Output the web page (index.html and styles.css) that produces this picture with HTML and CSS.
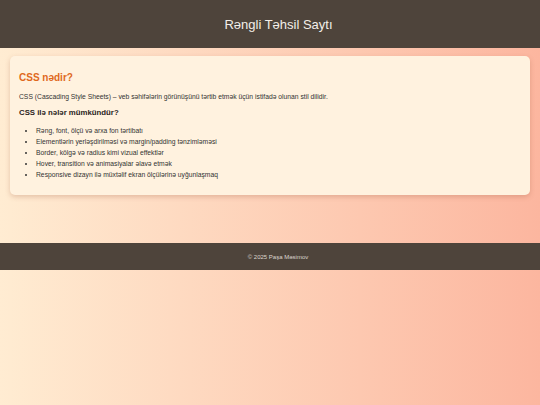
FILE: index.html
```html
<!DOCTYPE html>
<html lang="az">
<head>
<meta charset="utf-8">
<title>Rəngli Təhsil Saytı</title>
<link rel="stylesheet" href="styles.css">
</head>
<body>
<header class="site-header">
  <h1 class="site-title">Rəngli Təhsil Saytı</h1>
</header>
<main class="content">
  <section class="card">
    <h2 class="card-title">CSS nədir?</h2>
    <p class="card-text">CSS (Cascading Style Sheets) – veb səhifələrin görünüşünü tərtib etmək üçün istifadə olunan stil dilidir.</p>
    <h3 class="card-subtitle">CSS ilə nələr mümkündür?</h3>
    <ul class="card-list">
      <li>Rəng, font, ölçü və arxa fon tərtibatı</li>
      <li>Elementlərin yerləşdirilməsi və margin/padding tənzimləməsi</li>
      <li>Border, kölgə və radius kimi vizual effektlər</li>
      <li>Hover, transition və animasiyalar əlavə etmək</li>
      <li>Responsive dizayn ilə müxtəlif ekran ölçülərinə uyğunlaşmaq</li>
    </ul>
  </section>
</main>
<footer class="site-footer">
  <p class="footer-text">© 2025 Paşa Məsimov</p>
</footer>
</body>
</html>
```

FILE: styles.css
```css
html {
  min-height: 100%;
  background: linear-gradient(to right, #ffecd2, #fcb69f);
}
body {
  margin: 0;
  font-family: "Liberation Sans", Arial, sans-serif;
  color: #333;
}
.site-header {
  background: #4e443b;
  height: 48px;
  padding-left: 17px;
  display: flex;
  align-items: center;
  justify-content: center;
}
.site-title {
  margin: 0;
  font-size: 13px;
  font-weight: normal;
  color: #f3efe9;
}
.content {
  padding: 8px 10px 48px;
}
.card {
  background: #fff2df;
  border-radius: 5px;
  box-shadow: 0 2px 5px rgba(150, 80, 50, 0.25);
  padding: 16px 9px 15px;
}
.card-title {
  margin: 0 0 10px;
  font-size: 10px;
  color: #e0691c;
}
.card-text {
  margin: 0 0 8px;
  font-size: 6.75px;
}
.card-subtitle {
  margin: 0 0 8px;
  font-size: 7.8px;
  color: #2a2420;
}
.card-list {
  margin: 0;
  padding-left: 17px;
  font-size: 6.75px;
  line-height: 11px;
}
.site-footer {
  background: #4e443b;
  height: 27px;
  padding-left: 16px;
  display: flex;
  align-items: center;
  justify-content: center;
}
.footer-text {
  margin: 0;
  font-size: 6px;
  color: #ddd6cf;
}
```
